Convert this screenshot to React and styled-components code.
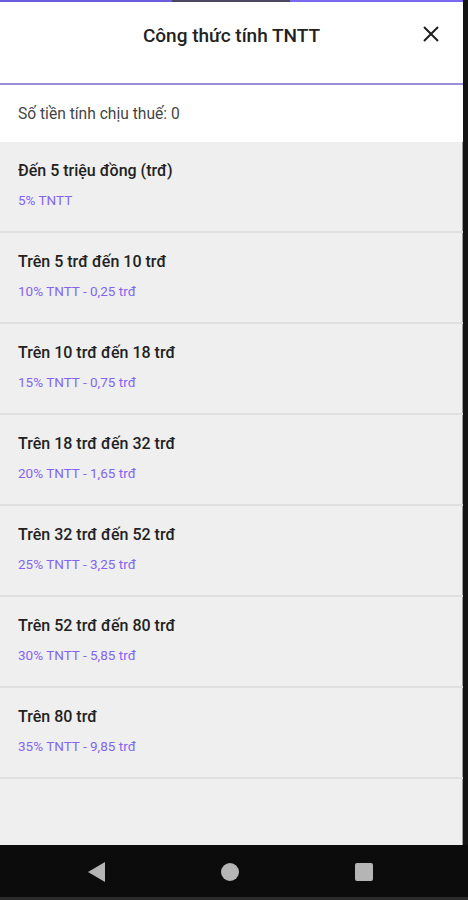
import React from 'react';
import styled, { createGlobalStyle } from 'styled-components';

const GlobalStyle = createGlobalStyle`
	html, body {
		margin: 0;
		padding: 0;
		background: #0c0c0c;
	}
	body {
		font-family: Roboto, "Noto Sans", "Liberation Sans", sans-serif;
	}
`;

const brackets = [
	{ title: 'Đến 5 triệu đồng (trđ)', formula: '5% TNTT' },
	{ title: 'Trên 5 trđ đến 10 trđ', formula: '10% TNTT - 0,25 trđ' },
	{ title: 'Trên 10 trđ đến 18 trđ', formula: '15% TNTT - 0,75 trđ' },
	{ title: 'Trên 18 trđ đến 32 trđ', formula: '20% TNTT - 1,65 trđ' },
	{ title: 'Trên 32 trđ đến 52 trđ', formula: '25% TNTT - 3,25 trđ' },
	{ title: 'Trên 52 trđ đến 80 trđ', formula: '30% TNTT - 5,85 trđ' },
	{ title: 'Trên 80 trđ', formula: '35% TNTT - 9,85 trđ' },
];

const App = () => {
	return (
		<>
			<GlobalStyle />
			<Phone>
				<Screen>
					<StatusStrip />
					<Header>
						<Title>Công thức tính TNTT</Title>
						<CloseButton aria-label="Đóng">
							<svg width="18" height="18" viewBox="0 0 18 18">
								<path d="M2 2 L16 16 M16 2 L2 16" stroke="#1f1f1f" strokeWidth="2" />
							</svg>
						</CloseButton>
					</Header>
					<Income>Số tiền tính chịu thuế: 0</Income>
					<List>
						{brackets.map((item, index) => (
							<Item key={index}>
								<ItemTitle>{item.title}</ItemTitle>
								<Formula>{item.formula}</Formula>
							</Item>
						))}
					</List>
				</Screen>
				<NavBar>
					<NavButton>
						<svg width="17" height="20" viewBox="0 0 17 20">
							<path d="M17 0 L17 20 L0 10 Z" fill="#b5b5b5" />
						</svg>
					</NavButton>
					<NavButton>
						<Dot />
					</NavButton>
					<NavButton>
						<Square />
					</NavButton>
				</NavBar>
			</Phone>
		</>
	);
};

export default App;

const Phone = styled.div`
	width: 468px;
	height: 900px;
	display: flex;
	flex-direction: column;
	background: #0c0c0c;
	overflow: hidden;
`;

const Screen = styled.div`
	flex: 1;
	display: flex;
	flex-direction: column;
	background: #efefef;
	border-right: 5px solid #141414;
	box-shadow: inset -1px 0 0 #9a9a9a;
`;

const StatusStrip = styled.div`
	height: 2px;
	background: linear-gradient(
		to right,
		#6c5ce0 0,
		#6c5ce0 172px,
		#4b4760 172px,
		#4b4760 290px,
		#7a68f0 290px
	);
`;

const Header = styled.div`
	height: 81px;
	display: flex;
	align-items: center;
	justify-content: center;
	position: relative;
	background: #ffffff;
	border-bottom: 2px solid #9c8fe0;
`;

const Title = styled.h1`
	margin: 0 0 14px;
	font-size: 19px;
	font-weight: 500;
	color: #222222;
`;

const CloseButton = styled.button`
	position: absolute;
	right: 23px;
	top: 23px;
	width: 18px;
	height: 18px;
	padding: 0;
	border: none;
	background: none;
	display: flex;
`;

const Income = styled.div`
	height: 57px;
	display: flex;
	align-items: center;
	padding: 0 18px;
	background: #ffffff;
	font-size: 15.6px;
	color: #454545;
`;

const List = styled.div`
	display: flex;
	flex-direction: column;
`;

const Item = styled.div`
	height: 91px;
	padding: 19px 18px 0;
	box-sizing: border-box;
	border-bottom: 2px solid #e0e0e0;
	display: flex;
	flex-direction: column;
	gap: 11px;
`;

const ItemTitle = styled.div`
	font-size: 16px;
	font-weight: 500;
	color: #222222;
	line-height: 20px;
`;

const Formula = styled.div`
	font-size: 13.5px;
	color: #8465f2;
	line-height: 16px;
`;

const NavBar = styled.div`
	height: 55px;
	display: grid;
	grid-template-columns: repeat(3, 134px);
	align-items: center;
	justify-items: center;
	padding: 0 0 0 29px;
	border-bottom: 3px solid #2c2c2c;
	box-sizing: border-box;
	background: #0c0c0c;
`;

const NavButton = styled.div`
	display: flex;
	align-items: center;
	justify-content: center;
	margin-top: 2px;
`;

const Dot = styled.div`
	width: 18px;
	height: 18px;
	border-radius: 50%;
	background: #b5b5b5;
`;

const Square = styled.div`
	width: 18px;
	height: 18px;
	border-radius: 2px;
	background: #b5b5b5;
`;
